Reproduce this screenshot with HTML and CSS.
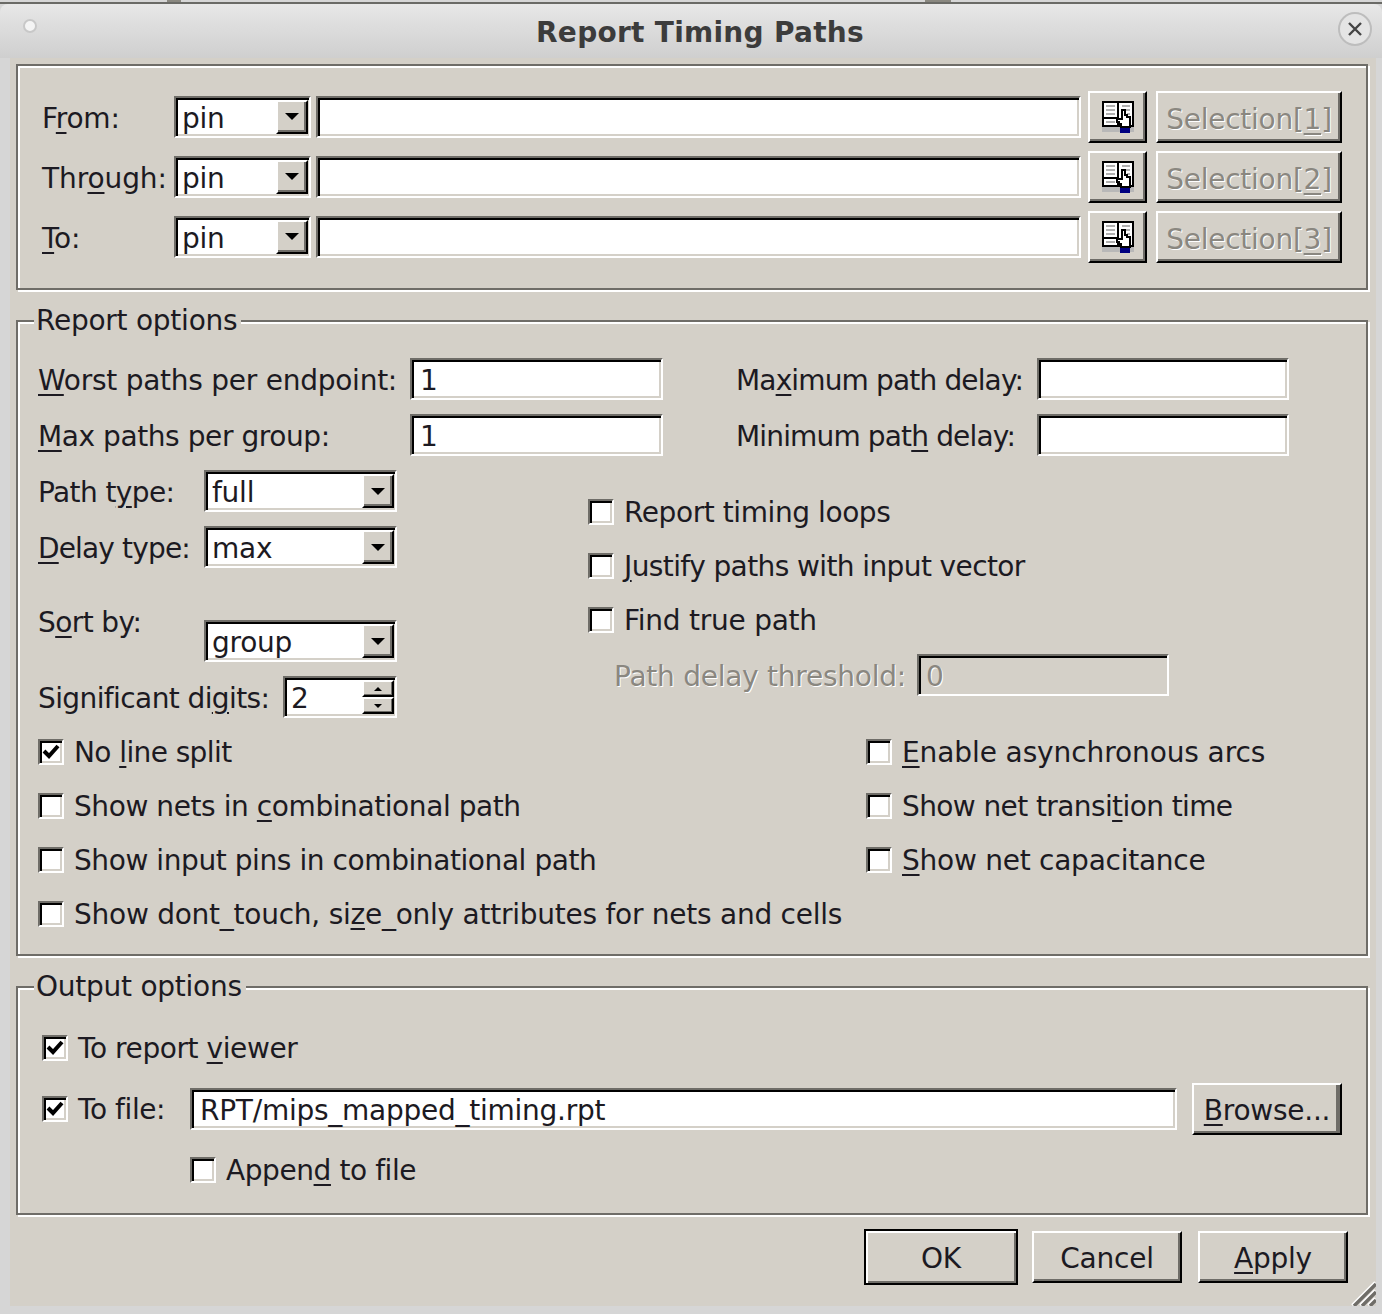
FILE: index.html
```html
<!DOCTYPE html>
<html lang="en">
  <head>
    <meta charset="UTF-8" />
    <title>Report Timing Paths</title>
    <link rel="stylesheet" href="styles.css">
  </head>
  <body>
    <svg class="defs" width="0" height="0">
      <symbol id="pick-icon" viewBox="0 0 32 32">
        <rect x="0" y="26" width="32" height="5" fill="#b8b8b8"/>
        <rect x="18" y="26" width="10" height="6" fill="#000080"/>
        <rect x="1" y="1" width="30" height="24" fill="#fff" stroke="#000" stroke-width="2"/>
        <rect x="15" y="1" width="2" height="24" fill="#000"/>
        <path d="M4 5h9M4 9h9M4 13h9M4 21h9M20 5h8M20 9h8M25 13h3" stroke="#b0b0b0" stroke-width="2"/>
        <path d="M2 17h13" stroke="#000" stroke-width="2"/>
        <path d="M20 9h3v5h2v2h3v10h-9v-3h-2v-2h-2v-3h5z" fill="#fff" stroke="#000" stroke-width="2"/>
      </symbol>
    </svg>

    <span class="top-mark mark-a"></span>
    <span class="top-mark mark-b"></span>

    <div class="window">
      <div class="titlebar">
        <span class="title-dot"></span>
        <span class="title-text">Report Timing Paths</span>
        <span class="title-close">
          <svg width="16" height="16" viewBox="0 0 16 16"><path d="M2 2l12 12M14 2L2 14" stroke="#444" stroke-width="2.4"/></svg>
        </span>
      </div>

      <div class="dialog">
        <div class="panel object-panel">
          <label><span>F<u>r</u>om:</span></label>
          <div class="combo"><span class="combo-value">pin</span><span class="combo-btn"><i></i></span></div>
          <div class="field"></div>
          <button class="btn icon-btn"><svg width="32" height="32"><use href="#pick-icon"/></svg></button>
          <button class="btn sel-btn" disabled>Selection[<u>1</u>]</button>

          <label class="loose"><span>Thr<u>o</u>ugh:</span></label>
          <div class="combo"><span class="combo-value">pin</span><span class="combo-btn"><i></i></span></div>
          <div class="field"></div>
          <button class="btn icon-btn"><svg width="32" height="32"><use href="#pick-icon"/></svg></button>
          <button class="btn sel-btn" disabled>Selection[<u>2</u>]</button>

          <label><span><u>T</u>o:</span></label>
          <div class="combo"><span class="combo-value">pin</span><span class="combo-btn"><i></i></span></div>
          <div class="field"></div>
          <button class="btn icon-btn"><svg width="32" height="32"><use href="#pick-icon"/></svg></button>
          <button class="btn sel-btn" disabled>Selection[<u>3</u>]</button>
        </div>

        <div class="panel report-panel">
          <div class="legend">Report options</div>

          <div class="limits">
            <label><u>W</u>orst paths per endpoint:</label>
            <div class="field">1</div>
            <label class="limit-right tighter">Ma<u>x</u>imum path delay:</label>
            <div class="field"></div>
            <label class="slight"><u>M</u>ax paths per group:</label>
            <div class="field">1</div>
            <label class="limit-right tighter">Minimum pat<u>h</u> delay:</label>
            <div class="field"></div>
          </div>

          <div class="middle">
            <div class="middle-left">
              <div class="opt-row">
                <label class="tight">Path t<u>y</u>pe:</label>
                <div class="combo wide"><span class="combo-value">full</span><span class="combo-btn"><i></i></span></div>
              </div>
              <div class="opt-row">
                <label class="tighter"><u>D</u>elay type:</label>
                <div class="combo wide"><span class="combo-value">max</span><span class="combo-btn"><i></i></span></div>
              </div>
              <div class="opt-row sort-row">
                <label class="tight">S<u>o</u>rt by:</label>
                <div class="combo wide"><span class="combo-value">group</span><span class="combo-btn"><i></i></span></div>
              </div>
              <div class="opt-row">
                <label class="tight">Significant di<u>g</u>its:</label>
                <div class="spin">
                  <span class="combo-value">2</span>
                  <span class="spin-btns">
                    <span class="spin-up"><i></i></span>
                    <span class="spin-down"><i></i></span>
                  </span>
                </div>
              </div>
            </div>
            <div class="middle-right">
              <div class="check"><span class="box"></span><span class="slight">Report timing loops</span></div>
              <div class="check"><span class="box"></span><span class="tight"><u>J</u>ustify paths with input vector</span></div>
              <div class="check"><span class="box"></span><span>Find true path</span></div>
              <div class="threshold">
                <label>Path delay threshold:</label>
                <div class="field disabled">0</div>
              </div>
            </div>
          </div>

          <div class="check-grid">
            <div class="check"><span class="box on"><svg width="18" height="16" viewBox="0 0 18 16"><path d="M2 7l5 5L16 2" fill="none" stroke="#000" stroke-width="4"/></svg></span><span class="tight">No <u>l</u>ine split</span></div>
            <div class="check"><span class="box"></span><span class="loose"><u>E</u>nable asynchronous arcs</span></div>
            <div class="check"><span class="box"></span><span class="slight">Show nets in <u>c</u>ombinational path</span></div>
            <div class="check"><span class="box"></span><span class="tight">Show net transi<u>t</u>ion time</span></div>
            <div class="check"><span class="box"></span><span class="slight">Show input pins in combinational path</span></div>
            <div class="check"><span class="box"></span><span><u>S</u>how net capacitance</span></div>
            <div class="check"><span class="box"></span><span>Show dont_touch, si<u>z</u>e_only attributes for nets and cells</span></div>
          </div>
        </div>

        <div class="panel output-panel">
          <div class="legend">Output options</div>
          <div class="check"><span class="box on"><svg width="18" height="16" viewBox="0 0 18 16"><path d="M2 7l5 5L16 2" fill="none" stroke="#000" stroke-width="4"/></svg></span><span class="slight">To report <u>v</u>iewer</span></div>
          <div class="file-row">
            <div class="check"><span class="box on"><svg width="18" height="16" viewBox="0 0 18 16"><path d="M2 7l5 5L16 2" fill="none" stroke="#000" stroke-width="4"/></svg></span><span class="slight">To file:</span></div>
            <div class="field">RPT/mips_mapped_timing.rpt</div>
            <button class="btn browse-btn"><u>B</u>rowse...</button>
          </div>
          <div class="check append"><span class="box"></span><span class="slight">Appen<u>d</u> to file</span></div>
        </div>

        <div class="actions">
          <button class="btn action-btn default-btn">OK</button>
          <button class="btn action-btn">Cancel</button>
          <button class="btn action-btn"><u>A</u>pply</button>
        </div>

        <svg class="grip" width="26" height="26" viewBox="0 0 26 26">
          <path d="M3 26L26 3M11 26L26 11M19 26l7-7" stroke="#fff" stroke-width="5"/>
          <path d="M4 26L26 4M12 26L26 12M20 26l6-6" stroke="#6f6d68" stroke-width="3.5"/>
        </svg>
      </div>
    </div>
  </body>
</html>
```

FILE: styles.css
```css
* {
  box-sizing: border-box;
}
html, body {
  margin: 0;
  padding: 0;
}
body {
  width: 1382px;
  height: 1314px;
  overflow: hidden;
  background: #d6d6d6;
  font-family: "DejaVu Sans", sans-serif;
  font-size: 28px;
  letter-spacing: -0.25px;
  color: #1c1a22;
}
.defs {
  display: block;
  height: 0;
}
u {
  text-decoration-thickness: 2px;
  text-underline-offset: 4px;
}
/* some labels run narrower or wider on the original */
.loose {
  letter-spacing: -0.1px;
}
.slight {
  letter-spacing: -0.42px;
}
.tight {
  letter-spacing: -0.6px;
}
.tighter {
  letter-spacing: -0.85px;
}
.top-mark {
  position: absolute;
  top: 0;
  height: 2px;
  background: #8a8880;
}
.mark-a {
  left: 167px;
  width: 14px;
}
.mark-b {
  left: 925px;
  width: 26px;
}
.window {
  height: 1304px;
  border-top: 2px solid #6a6a66;
  margin-top: 2px;
  display: flex;
  flex-direction: column;
}

/* title bar */
.titlebar {
  height: 54px;
  flex: none;
  display: flex;
  align-items: center;
  justify-content: center;
  position: relative;
  background: linear-gradient(180deg, #e8e8e8 0%, #e2e2e2 20%, #cfcfcf 100%);
  border-radius: 8px 8px 0 0;
}
.title-text {
  font-weight: bold;
  font-size: 28px;
  color: #3c3c3c;
  margin-left: 18px;
  margin-top: 2px;
  letter-spacing: 0.28px;
}
.title-dot {
  position: absolute;
  left: 23px;
  top: 15px;
  width: 14px;
  height: 14px;
  border-radius: 50%;
  background: #f4f4f4;
  border: 2px solid #c8c8c8;
}
.title-close {
  position: absolute;
  right: 10px;
  top: 8px;
  width: 34px;
  height: 34px;
  border-radius: 50%;
  border: 2px solid #bdbdbd;
  background: #e4e4e4;
  display: flex;
  align-items: center;
  justify-content: center;
}

/* dialog body */
.dialog {
  flex: 1;
  margin: 0 6px 0 10px;
  padding: 6px 8px 0 6px;
  background: #d4d0c8;
  position: relative;
}
.panel {
  position: relative;
  width: 1352px;
  border: 2px solid #6f6d68;
  box-shadow: inset 2px 2px 0 #fff, 2px 2px 0 #fff;
}
.legend {
  position: absolute;
  left: 16px;
  top: -20px;
  padding: 0 4px 0 2px;
  height: 36px;
  line-height: 38px;
  background: #d4d0c8;
}
label {
  white-space: nowrap;
  padding-top: 2px;
}

/* sunken input */
.field, .combo, .spin {
  height: 42px;
  line-height: 42px;
  padding-left: 8px;
  background: #fff;
  border: 2px solid;
  border-color: #6f6d68 #fff #fff #6f6d68;
  box-shadow: inset 2px 2px 0 #000, inset -2px -2px 0 #d4d0c8;
  white-space: nowrap;
}
.field.disabled {
  padding-left: 7px;
  background: #d4d0c8;
  color: #8a8780;
  text-shadow: 1px 1px 0 #fff;
}
.combo, .spin {
  display: flex;
  justify-content: space-between;
  padding: 0 1px 0 6px;
}
.combo-btn {
  width: 32px;
  height: 34px;
  margin-top: 2px;
  background: #d4d0c8;
  border-style: solid;
  border-width: 2px;
  border-color: #fff #000 #000 #fff;
  box-shadow: inset -2px -2px 0 #6f6d68;
  display: flex;
  align-items: center;
  justify-content: center;
  flex: none;
}
.combo-btn i {
  width: 0;
  height: 0;
  border-left: 7px solid transparent;
  border-right: 7px solid transparent;
  border-top: 7px solid #000;
}
.spin-btns {
  width: 32px;
  margin-top: 2px;
  display: flex;
  flex-direction: column;
  flex: none;
}
.spin-up, .spin-down {
  height: 17px;
  background: #d4d0c8;
  border-style: solid;
  border-width: 2px;
  border-color: #fff #000 #000 #fff;
  box-shadow: inset -1px -1px 0 #6f6d68;
  display: flex;
  align-items: center;
  justify-content: center;
}
.spin-up i {
  border-left: 4px solid transparent;
  border-right: 4px solid transparent;
  border-bottom: 4px solid #000;
}
.spin-down i {
  border-left: 4px solid transparent;
  border-right: 4px solid transparent;
  border-top: 4px solid #000;
}

/* raised buttons */
.btn {
  font: inherit;
  letter-spacing: inherit;
  color: inherit;
  margin: 0;
  padding: 2px 0 0;
  height: 52px;
  background: #d4d0c8;
  border-style: solid;
  border-width: 2px;
  border-color: #fff #000 #000 #fff;
  box-shadow: inset -2px -2px 0 #6f6d68;
}
.btn:disabled {
  color: #8a8780;
  text-shadow: 1px 1px 0 #fff;
}

/* from / through / to */
.object-panel {
  height: 226px;
  padding: 25px 0 0 24px;
  display: grid;
  grid-template-columns: 132px 137px 770px 66px 195px;
  grid-template-rows: 51px 51px 51px;
  row-gap: 9px;
  align-items: center;
}
.object-panel label {
  padding-top: 4px;
}
.object-panel .field {
  margin-left: 5px;
  width: 765px;
}
.object-panel .icon-btn {
  width: 59px;
  margin-left: 7px;
  padding: 0;
  display: flex;
  align-items: center;
  justify-content: center;
}
.sel-btn {
  width: 186px;
  margin-left: 9px;
  padding-top: 5px;
}

/* report options */
.report-panel {
  height: 636px;
  margin-top: 30px;
  padding: 36px 0 0 20px;
}
.limits {
  display: grid;
  grid-template-columns: 372px 253px 73px 301px 252px;
  grid-auto-rows: 42px;
  row-gap: 14px;
  align-items: center;
}
.limit-right {
  grid-column: 4;
}
.limits .field:nth-child(4), .limits .field:nth-child(8) {
  grid-column: 5;
}
.middle {
  display: flex;
  margin-top: 14px;
}
.middle-left {
  width: 359px;
  display: flex;
  flex-direction: column;
  row-gap: 14px;
}
.opt-row {
  height: 42px;
  display: flex;
  align-items: center;
  justify-content: space-between;
}
.combo.wide {
  width: 193px;
}
.spin {
  width: 114px;
}
.sort-row {
  height: 80px;
  align-items: flex-end;
}
.sort-row label {
  align-self: flex-start;
  margin-top: 21px;
  padding-top: 0;
  line-height: 40px;
}
.middle-right {
  margin-left: 191px;
  padding-top: 22px;
  display: flex;
  flex-direction: column;
  row-gap: 14px;
}
.check {
  height: 40px;
  display: flex;
  align-items: center;
  column-gap: 10px;
  white-space: nowrap;
}
.box {
  width: 26px;
  height: 26px;
  flex: none;
  background: #fff;
  border: 2px solid;
  border-color: #6f6d68 #fff #fff #6f6d68;
  box-shadow: inset 2px 2px 0 #000, inset -2px -2px 0 #d4d0c8;
  display: flex;
  align-items: center;
  justify-content: center;
}
.threshold {
  height: 42px;
  padding-left: 26px;
  display: flex;
  align-items: center;
}
.threshold label {
  width: 303px;
  color: #8a8780;
  text-shadow: 1px 1px 0 #fff;
}
.threshold .field {
  width: 252px;
}
.check-grid {
  display: grid;
  grid-template-columns: 828px auto;
  row-gap: 14px;
  margin-top: 14px;
}

/* output options */
.output-panel {
  height: 229px;
  margin-top: 30px;
  padding: 40px 0 0 24px;
}
.file-row {
  display: flex;
  align-items: center;
  height: 52px;
  margin-top: 15px;
}
.file-row .check {
  width: 148px;
}
.file-row .field {
  width: 987px;
}
.browse-btn {
  width: 150px;
  margin-left: 15px;
  box-shadow: inset -4px -2px 0 #6f6d68;
}
.append {
  margin: 15px 0 0 148px;
}

/* bottom buttons */
.actions {
  width: 1332px;
  display: flex;
  justify-content: flex-end;
  align-items: center;
  margin-top: 14px;
  column-gap: 16px;
}
.action-btn {
  width: 150px;
}
.default-btn {
  width: 154px;
  height: 56px;
  margin-right: -2px;
  border-color: #000;
  box-shadow: inset 2px 2px 0 #fff, inset -2px -2px 0 #6f6d68;
}
.grip {
  position: absolute;
  right: 0;
  bottom: 0;
}
```
